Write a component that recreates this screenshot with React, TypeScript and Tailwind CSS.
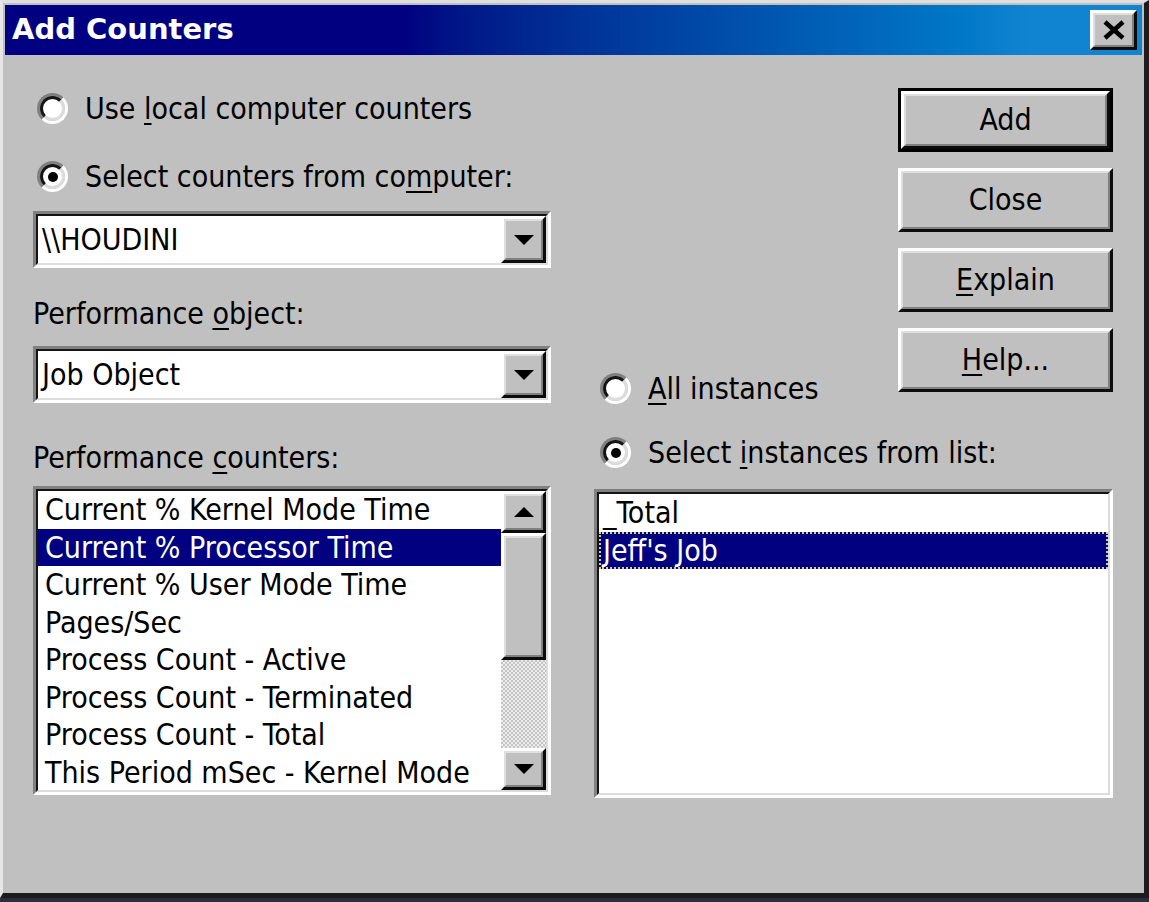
import React from 'react'

const counters = [
  'Current % Kernel Mode Time',
  'Current % Processor Time',
  'Current % User Mode Time',
  'Pages/Sec',
  'Process Count - Active',
  'Process Count - Terminated',
  'Process Count - Total',
  'This Period mSec - Kernel Mode',
]

// sunken 3d frame for edit fields and list boxes
function Sunken({ className = '', children }: { className?: string; children: React.ReactNode }) {
  return (
    <div className={`border-[3px] border-t-[#808080] border-l-[#808080] border-r-white border-b-white ${className}`}>
      <div className="h-full border-2 border-t-[#141414] border-l-[#141414] border-r-[#dcdcdc] border-b-[#dcdcdc] bg-white flex overflow-hidden">
        {children}
      </div>
    </div>
  )
}

// raised 3d bevel, used for buttons and scroll parts
function Raised({ className = '', children }: { className?: string; children?: React.ReactNode }) {
  return (
    <div className={`border-[3px] border-t-white border-l-white border-r-[#0c0c0c] border-b-[#0c0c0c] ${className}`}>
      <div className="h-full border-2 border-t-[#dfdfdf] border-l-[#dfdfdf] border-r-[#808080] border-b-[#808080] bg-[#c0c0c0] flex items-center justify-center">
        {children}
      </div>
    </div>
  )
}

function Radio({ checked }: { checked?: boolean }) {
  return (
    <div className="w-[31px] h-[31px] shrink-0 rounded-full border-[3px] border-t-[#808080] border-l-[#808080] border-r-white border-b-white">
      <div className="w-full h-full rounded-full border-[3px] border-t-[#141414] border-l-[#141414] border-r-[#dcdcdc] border-b-[#dcdcdc] bg-white flex items-center justify-center">
        {checked && <div className="w-[10px] h-[10px] rounded-full bg-black" />}
      </div>
    </div>
  )
}

function Tri({ up }: { up?: boolean }) {
  return (
    <svg width="20" height="10" viewBox="0 0 20 10">
      <polygon points={up ? '10,0 20,10 0,10' : '0,0 20,0 10,10'} fill="#000" />
    </svg>
  )
}

function Combo({ value }: { value: string }) {
  return (
    <Sunken className="h-[57px]">
      <div className="flex-1 flex items-center pl-[4px] text-[30px] leading-none">{value}</div>
      <Raised className="w-[45px] h-full">
        <Tri />
      </Raised>
    </Sunken>
  )
}

function Btn({ children, isDefault }: { children: React.ReactNode; isDefault?: boolean }) {
  return (
    <div className={`h-[64px] ${isDefault ? 'border-[3px] border-black' : ''}`}>
      <Raised className="h-full">
        <span className="text-[30px] leading-none">{children}</span>
      </Raised>
    </div>
  )
}

const u = 'underline underline-offset-[4px] decoration-2'

export default function App() {
  return (
    <div className="min-h-screen bg-[#2c2c3c]">
      <div className="w-[1149px] h-[898px] bg-[#c0c0c0] text-black border-t-[3px] border-l-[3px] border-t-[#dfdfdf] border-l-[#e6e6e6] border-r-[5px] border-b-[5px] border-r-[#1c1c1c] border-b-[#1c1c1c] p-[2px] flex flex-col [font-family:'DejaVu_Sans_Condensed','DejaVu_Sans',sans-serif] font-stretch-condensed">
        {/* title bar */}
        <div className="h-[50px] shrink-0 flex items-center justify-between bg-linear-to-r from-[#000080] from-35% to-[#1084d0] to-90%">
          <span className="pl-[7px] text-white font-bold text-[29px] [font-family:'DejaVu_Sans',sans-serif] [font-stretch:normal]">
            Add Counters
          </span>
          <Raised className="w-[47px] h-[40px] mr-[5px]">
            <svg width="24" height="20" viewBox="0 0 24 20">
              <path d="M3 2 L21 18 M21 2 L3 18" stroke="#000" strokeWidth="4.5" />
            </svg>
          </Raised>
        </div>

        <div className="flex flex-1 pl-[28px] text-[30px] leading-none">
          {/* left column */}
          <div className="w-[518px] flex flex-col pt-[38px]">
            <div className="h-[31px] flex items-center gap-[17px] pl-[4px]">
              <Radio />
              <span>Use <u className={u}>l</u>ocal computer counters</span>
            </div>
            <div className="h-[31px] mt-[37px] flex items-center gap-[17px] pl-[4px]">
              <Radio checked />
              <span>Select counters from co<u className={u}>m</u>puter:</span>
            </div>
            <div className="mt-[19px]">
              <Combo value="\\HOUDINI" />
            </div>
            <div className="h-[36px] mt-[28px] flex items-center">
              <span>Performance <u className={u}>o</u>bject:</span>
            </div>
            <div className="mt-[14px]">
              <Combo value="Job Object" />
            </div>
            <div className="h-[36px] mt-[37px] flex items-center">
              <span>Performance <u className={u}>c</u>ounters:</span>
            </div>
            <Sunken className="h-[309px] mt-[10px]">
              <div className="flex-1 flex flex-col whitespace-nowrap">
                {counters.map((c, i) => (
                  <div
                    key={c}
                    className={`h-[37.5px] leading-[37.5px] pl-[7px] ${i === 1 ? 'bg-[#000080] text-white' : ''}`}
                  >
                    {c}
                  </div>
                ))}
              </div>
              <div className="w-[45px] flex flex-col">
                <Raised className="h-[42px]">
                  <Tri up />
                </Raised>
                <Raised className="h-[127px]" />
                <div className="flex-1 bg-[repeating-conic-gradient(#c4c4c4_0%_25%,#ececec_0%_50%)] bg-size-[4px_4px]" />
                <Raised className="h-[42px]">
                  <Tri />
                </Raised>
              </div>
            </Sunken>
          </div>

          {/* right column */}
          <div className="w-[519px] ml-[43px] flex flex-col pt-[33px]">
            <div className="w-[215px] self-end flex flex-col gap-[16px]">
              <Btn isDefault>Add</Btn>
              <Btn>Close</Btn>
              <Btn><u className={u}>E</u>xplain</Btn>
              <Btn><u className={u}>H</u>elp...</Btn>
            </div>
            <div className="h-[31px] mt-[-19px] flex items-center gap-[17px] pl-[6px]">
              <Radio />
              <span><u className={u}>A</u>ll instances</span>
            </div>
            <div className="h-[31px] mt-[33px] flex items-center gap-[17px] pl-[6px]">
              <Radio checked />
              <span>Select <u className={u}>i</u>nstances from list:</span>
            </div>
            <Sunken className="h-[309px] mt-[21px]">
              <div className="flex-1 flex flex-col whitespace-nowrap">
                <div className="h-[37.5px] leading-[37.5px] pl-[4px]">_Total</div>
                <div className="h-[37.5px] leading-[33.5px] pl-[2px] bg-[#000080] text-white border-2 border-dotted border-[#d6d08c]">
                  Jeff's Job
                </div>
              </div>
            </Sunken>
          </div>
        </div>
      </div>
    </div>
  )
}
